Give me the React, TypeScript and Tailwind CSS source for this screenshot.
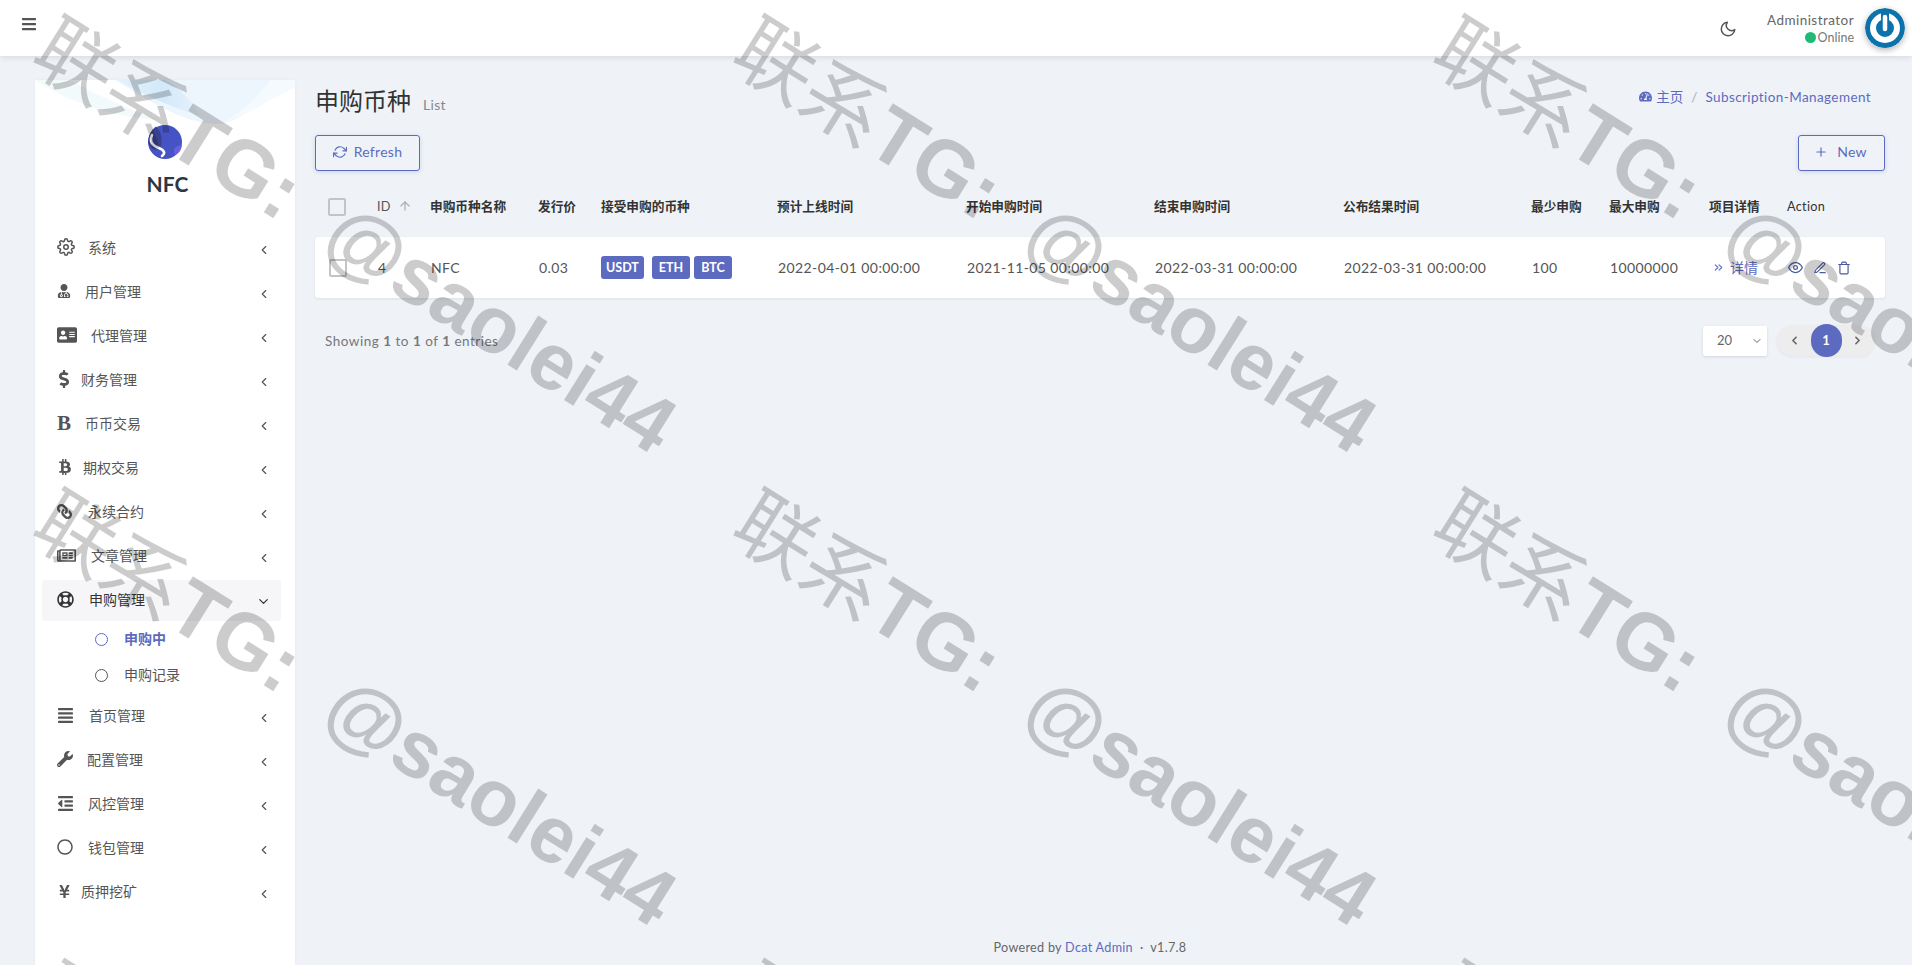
import React from "react";
import {
  FaBars, FaUserMd, FaAddressCard, FaDollarSign, FaBtc, FaLink, FaRegNewspaper,
  FaRegLifeRing, FaAlignJustify, FaWrench, FaOutdent, FaRegCircle, FaYenSign, FaTachometerAlt,
} from "react-icons/fa";
import {
  FiSettings, FiMoon, FiRefreshCw, FiPlus, FiEye, FiEdit3, FiTrash, FiChevronLeft, FiChevronRight,
  FiChevronDown, FiChevronsRight, FiArrowUp,
} from "react-icons/fi";

const menu = [
  { label: "系统", icon: <FiSettings size={18} />, w: "w-[31px]" },
  { label: "用户管理", icon: <FaUserMd size={14} />, w: "w-[28px]" },
  { label: "代理管理", icon: <FaAddressCard size={20} />, w: "w-[34px]" },
  { label: "财务管理", icon: <FaDollarSign size={18} className="-ml-[2px]" />, w: "w-[24px]" },
  { label: "币币交易", icon: <span className="block text-[21px] leading-[21px] font-bold font-['Liberation_Serif',serif]">B</span>, w: "w-[28px]" },
  { label: "期权交易", icon: <FaBtc size={16} />, w: "w-[26px]" },
  { label: "永续合约", icon: <FaLink size={15} className="-scale-x-100" />, w: "w-[31px]" },
  { label: "文章管理", icon: <FaRegNewspaper size={19} />, w: "w-[34px]" },
  { label: "申购管理", icon: <FaRegLifeRing size={17} />, w: "w-[32px]", active: true },
  { label: "首页管理", icon: <FaAlignJustify size={17} />, w: "w-[32px]" },
  { label: "配置管理", icon: <FaWrench size={16} />, w: "w-[30px]" },
  { label: "风控管理", icon: <FaOutdent size={17} />, w: "w-[31px]" },
  { label: "钱包管理", icon: <FaRegCircle size={16} />, w: "w-[31px]" },
  { label: "质押挖矿", icon: <FaYenSign size={15} />, w: "w-[24px]" },
];

const cols =
  "grid grid-cols-[62px_53px_108px_63px_176px_189px_188px_189px_188px_78px_100px_78px_98px] items-center";
const heads = ["申购币种名称", "发行价", "接受申购的币种", "预计上线时间", "开始申购时间", "结束申购时间", "公布结果时间", "最少申购", "最大申购", "项目详情"];

const tiles = [0, 1, 2].flatMap((r) => [0, 1, 2].map((c) => ({ left: 67 + c * 700, top: 1 + r * 472.5 })));

function Watermark() {
  return (
    <div className="absolute inset-0 overflow-hidden pointer-events-none z-50">
      {tiles.map((t, i) => (
        <div
          key={i}
          style={t}
          className="absolute origin-top-left rotate-[32deg] whitespace-nowrap text-[80px] leading-none text-black/20 font-['Liberation_Sans','Noto_Sans_CJK_SC',sans-serif]"
        >
          <span className="font-['Noto_Sans_CJK_JP',sans-serif] font-normal">联系</span>
          <span className="font-bold">TG:</span>
          <span className="font-bold ml-[47px]">@saolei44</span>
        </div>
      ))}
    </div>
  );
}

function Wave() {
  return (
    <svg viewBox="0 0 260 50" className="absolute left-0 top-0 w-[260px] h-[50px]">
      <defs>
        <linearGradient id="waveBlue" x1="0" y1="0" x2="1" y2="0">
          <stop offset="0" stopColor="#e4f3fb" />
          <stop offset="0.55" stopColor="#d3e9f9" />
          <stop offset="1" stopColor="#e6f2fc" />
        </linearGradient>
      </defs>
      <path d="M0 0 C40 26 85 38 125 40 C90 28 60 14 35 0Z" fill="#f3fafb" />
      <path d="M80 0 C110 18 150 46 187 44 C212 38 232 16 250 0Z" fill="#eef6fd" />
      <path d="M82 0 C108 14 135 27 165 36 C158 22 145 8 130 0Z" fill="url(#waveBlue)" />
      <path d="M235 0 C222 18 208 30 190 42 C220 32 240 15 260 8 L260 0Z" fill="#f4fafe" />
    </svg>
  );
}

function Logo() {
  return (
    <svg viewBox="0 0 34 34" className="w-[34px] h-[34px]">
      <circle cx="17" cy="17" r="17" fill="#4553c4" />
      <path d="M8 1.5 C3 5 0 11 0.3 18 C2 24 6 26 12 24 C15 16 14 7 8 1.5Z" fill="#39418f" />
      <path d="M27 30 C24 24 27 21 34 20 C33 26 31 28 27 30Z" fill="#6b5de0" />
      <path d="M4 10 C1 17 5 21 11 23 C16 25 18 28 14 31" stroke="#ffffff" strokeWidth="2.6" fill="none" strokeLinecap="round" />
    </svg>
  );
}

function Avatar() {
  return (
    <svg viewBox="0 0 40 40" className="w-10 h-10 rounded-full shadow-[0_2px_6px_rgba(0,0,0,0.3)]">
      <circle cx="20" cy="20" r="20" fill="#0b72ab" />
      <circle cx="20" cy="20" r="12" fill="none" stroke="#ffffff" strokeWidth="6" />
      <path d="M20 4 V17" stroke="#0b72ab" strokeWidth="8" />
      <path d="M20 9 V21" stroke="#ffffff" strokeWidth="4.5" strokeLinecap="round" />
    </svg>
  );
}

function MenuItem({ item }: { item: (typeof menu)[number] }) {
  return (
    <div className={`h-[41px] mb-[3px] mr-[7px] flex items-center pl-[15px] pr-[10px] rounded-[3px] ${item.active ? "bg-[#f6f6f9] text-[#333]" : "text-[#555]"}`}>
      <span className={`${item.w} shrink-0 -mt-[3px]`}>{item.icon}</span>
      <span className="text-sm leading-5 -mt-[2px]">{item.label}</span>
      <span className="ml-auto mt-[2px]">
        {item.active ? <FiChevronDown size={15} /> : <FiChevronLeft size={14} />}
      </span>
    </div>
  );
}

export default function App() {
  return (
    <div className="relative h-[965px] overflow-hidden bg-[#eff3f8] text-[#555] font-['Lato','Noto_Sans_CJK_SC',sans-serif]">
      <header className="h-14 bg-white shadow-[0_1px_6px_rgba(0,0,0,0.12)] flex items-center pl-[21px] pr-[7px] relative z-10">
        <FaBars size={16} className="text-[#555] -mt-[8px]" />
        <div className="ml-auto flex items-center">
          <FiMoon size={18} className="text-[#555] mr-[30px] mt-[2px]" />
          <div className="text-right mr-[11px] mt-[1px]">
            <div className="text-[13.5px] leading-[18px] tracking-[0.45px] text-[#666]">Administrator</div>
            <div className="text-[12.5px] leading-[18px] text-[#777] flex items-center justify-end">
              <span className="w-[11px] h-[11px] rounded-full bg-[#21b978] mr-[2px]" />
              Online
            </div>
          </div>
          <Avatar />
        </div>
      </header>

      <div className="flex h-[909px]">
        <aside className="relative ml-[35px] mt-6 w-[260px] shrink-0 bg-white pt-[45px] px-[7px] shadow-[0_0_4px_rgba(0,0,0,0.04)]">
          <Wave />
          <div className="relative flex flex-col items-center">
            <Logo />
            <div className="text-[21px] leading-7 font-bold text-[#2c3644] mt-[11px] ml-[5px]">NFC</div>
          </div>
          <nav className="mt-[30px]">
            {menu.slice(0, 9).map((m) => (
              <MenuItem key={m.label} item={m} />
            ))}
            <div className="-mt-[3px] mb-[3px]">
              <div className="h-9 flex items-center pl-[53px]">
                <span className="w-[13px] h-[13px] rounded-full border border-[#5c6bc0] mr-[16px]" />
                <span className="text-sm font-bold text-[#5c6bc0]">申购中</span>
              </div>
              <div className="h-9 flex items-center pl-[53px]">
                <span className="w-[13px] h-[13px] rounded-full border border-[#555] mr-[16px]" />
                <span className="text-sm">申购记录</span>
              </div>
            </div>
            {menu.slice(9).map((m) => (
              <MenuItem key={m.label} item={m} />
            ))}
          </nav>
        </aside>

        <main className="ml-5 w-[1570px] flex flex-col">
          <div className="flex items-end justify-between h-[67px] pb-[6px]">
            <div className="flex items-baseline">
              <h1 className="text-2xl leading-8 text-[#333]">申购币种</h1>
              <span className="ml-3 text-sm text-[#888] tracking-[0.3px]">List</span>
            </div>
            <div className="flex items-center text-[13.5px] text-[#5c6bc0] mr-[14px] mb-[10px]">
              <FaTachometerAlt size={13} className="mr-[4px]" />
              <span>主页</span>
              <span className="mx-[8px] text-[#aaa]">/</span>
              <span className="tracking-[0.4px]">Subscription-Management</span>
            </div>
          </div>

          <div className="flex justify-between mt-3">
            <button className="w-[105px] h-9 border border-[#5c6bc0] rounded-[3px] text-[#5c6bc0] text-sm tracking-[0.3px] flex items-center justify-center pb-[2px] shadow-[0_1px_4px_rgba(92,107,192,0.25)]">
              <FiRefreshCw size={14} className="mr-[7px]" />
              Refresh
            </button>
            <button className="w-[87px] h-9 border border-[#5c6bc0] rounded-[3px] text-[#5c6bc0] text-sm tracking-[0.3px] flex items-center justify-center pb-[2px] pr-[2px] shadow-[0_1px_4px_rgba(92,107,192,0.25)]">
              <FiPlus size={14} className="mr-[9px]" />
              New
            </button>
          </div>

          <div className={`${cols} h-[66px] pt-[5px] text-[12.7px] text-[#333] font-bold`}>
            <span className="ml-[13px] w-[18px] h-[18px] border-2 border-[#c4c4c4] rounded-[2px]" />
            <span className="font-normal text-[#555] flex items-center tracking-[0.3px]">
              ID
              <FiArrowUp size={14} className="ml-[7px] text-[#aaa]" />
            </span>
            {heads.map((h) => (
              <span key={h}>{h}</span>
            ))}
            <span className="font-normal tracking-[0.3px]">Action</span>
          </div>

          <div className={`${cols} h-[61px] bg-white rounded-[3px] shadow-[0_1px_3px_rgba(0,0,0,0.08)] text-sm tracking-[0.4px] text-[#555] [&>span]:pl-px`}>
            <span className="ml-[14px] w-[18px] h-[18px] border-2 border-[#c4c4c4] rounded-[2px]" />
            <span>4</span>
            <span>NFC</span>
            <span>0.03</span>
            <span className="-ml-px flex tracking-normal">
              <span className="h-[23px] px-[5px] mr-[8px] rounded-[3px] bg-[#5c6bc0] text-white text-[12.5px] font-bold flex items-center">USDT</span>
              <span className="h-[23px] px-[7px] mr-[4px] rounded-[3px] bg-[#5c6bc0] text-white text-[12.5px] font-bold flex items-center">ETH</span>
              <span className="h-[23px] px-[7px] rounded-[3px] bg-[#5c6bc0] text-white text-[12.5px] font-bold flex items-center">BTC</span>
            </span>
            <span>2022-04-01 00:00:00</span>
            <span>2021-11-05 00:00:00</span>
            <span>2022-03-31 00:00:00</span>
            <span>2022-03-31 00:00:00</span>
            <span>100</span>
            <span>10000000</span>
            <span className="flex items-center text-[#5c6bc0] tracking-normal">
              <FiChevronsRight size={13} className="mr-[5px] ml-[2px]" />
              详情
            </span>
            <span className="flex items-center text-[#4a5a9c] gap-[10px]">
              <FiEye size={15} />
              <FiEdit3 size={14} />
              <FiTrash size={14} />
            </span>
          </div>

          <div className="flex items-center mt-[27px] pl-[10px] pr-[10px]">
            <span className="text-[13.5px] text-[#777] tracking-[0.5px] mt-[1px]">
              Showing <b>1</b> to <b>1</b> of <b>1</b> entries
            </span>
            <div className="ml-auto flex items-center">
              <div className="w-16 h-[30px] bg-white rounded-[2px] shadow-[0_1px_3px_rgba(0,0,0,0.12)] flex items-center justify-between pl-[14px] pr-[4px] text-[13px] text-[#666]">
                20
                <FiChevronDown size={12} />
              </div>
              <div className="ml-[10px] w-[98px] h-[31px] rounded-full bg-[#ededed] shadow-[0_1px_3px_rgba(0,0,0,0.06)] flex items-center justify-between pl-[11px] pr-[11px] text-[#666]">
                <FiChevronLeft size={13} strokeWidth={3} />
                <span className="w-[31px] h-[33px] rounded-full bg-[#5c6bc0] text-white text-[13px] font-bold flex items-center justify-center">1</span>
                <FiChevronRight size={13} strokeWidth={3} />
              </div>
            </div>
          </div>

          <footer className="mt-auto pb-[7px] pr-[20px] text-center text-[12.6px] text-[#666] tracking-[0.3px]">
            Powered by <span className="text-[#5c6bc0]">Dcat Admin</span> &nbsp;·&nbsp; v1.7.8
          </footer>
        </main>
      </div>
      <Watermark />
    </div>
  );
}
